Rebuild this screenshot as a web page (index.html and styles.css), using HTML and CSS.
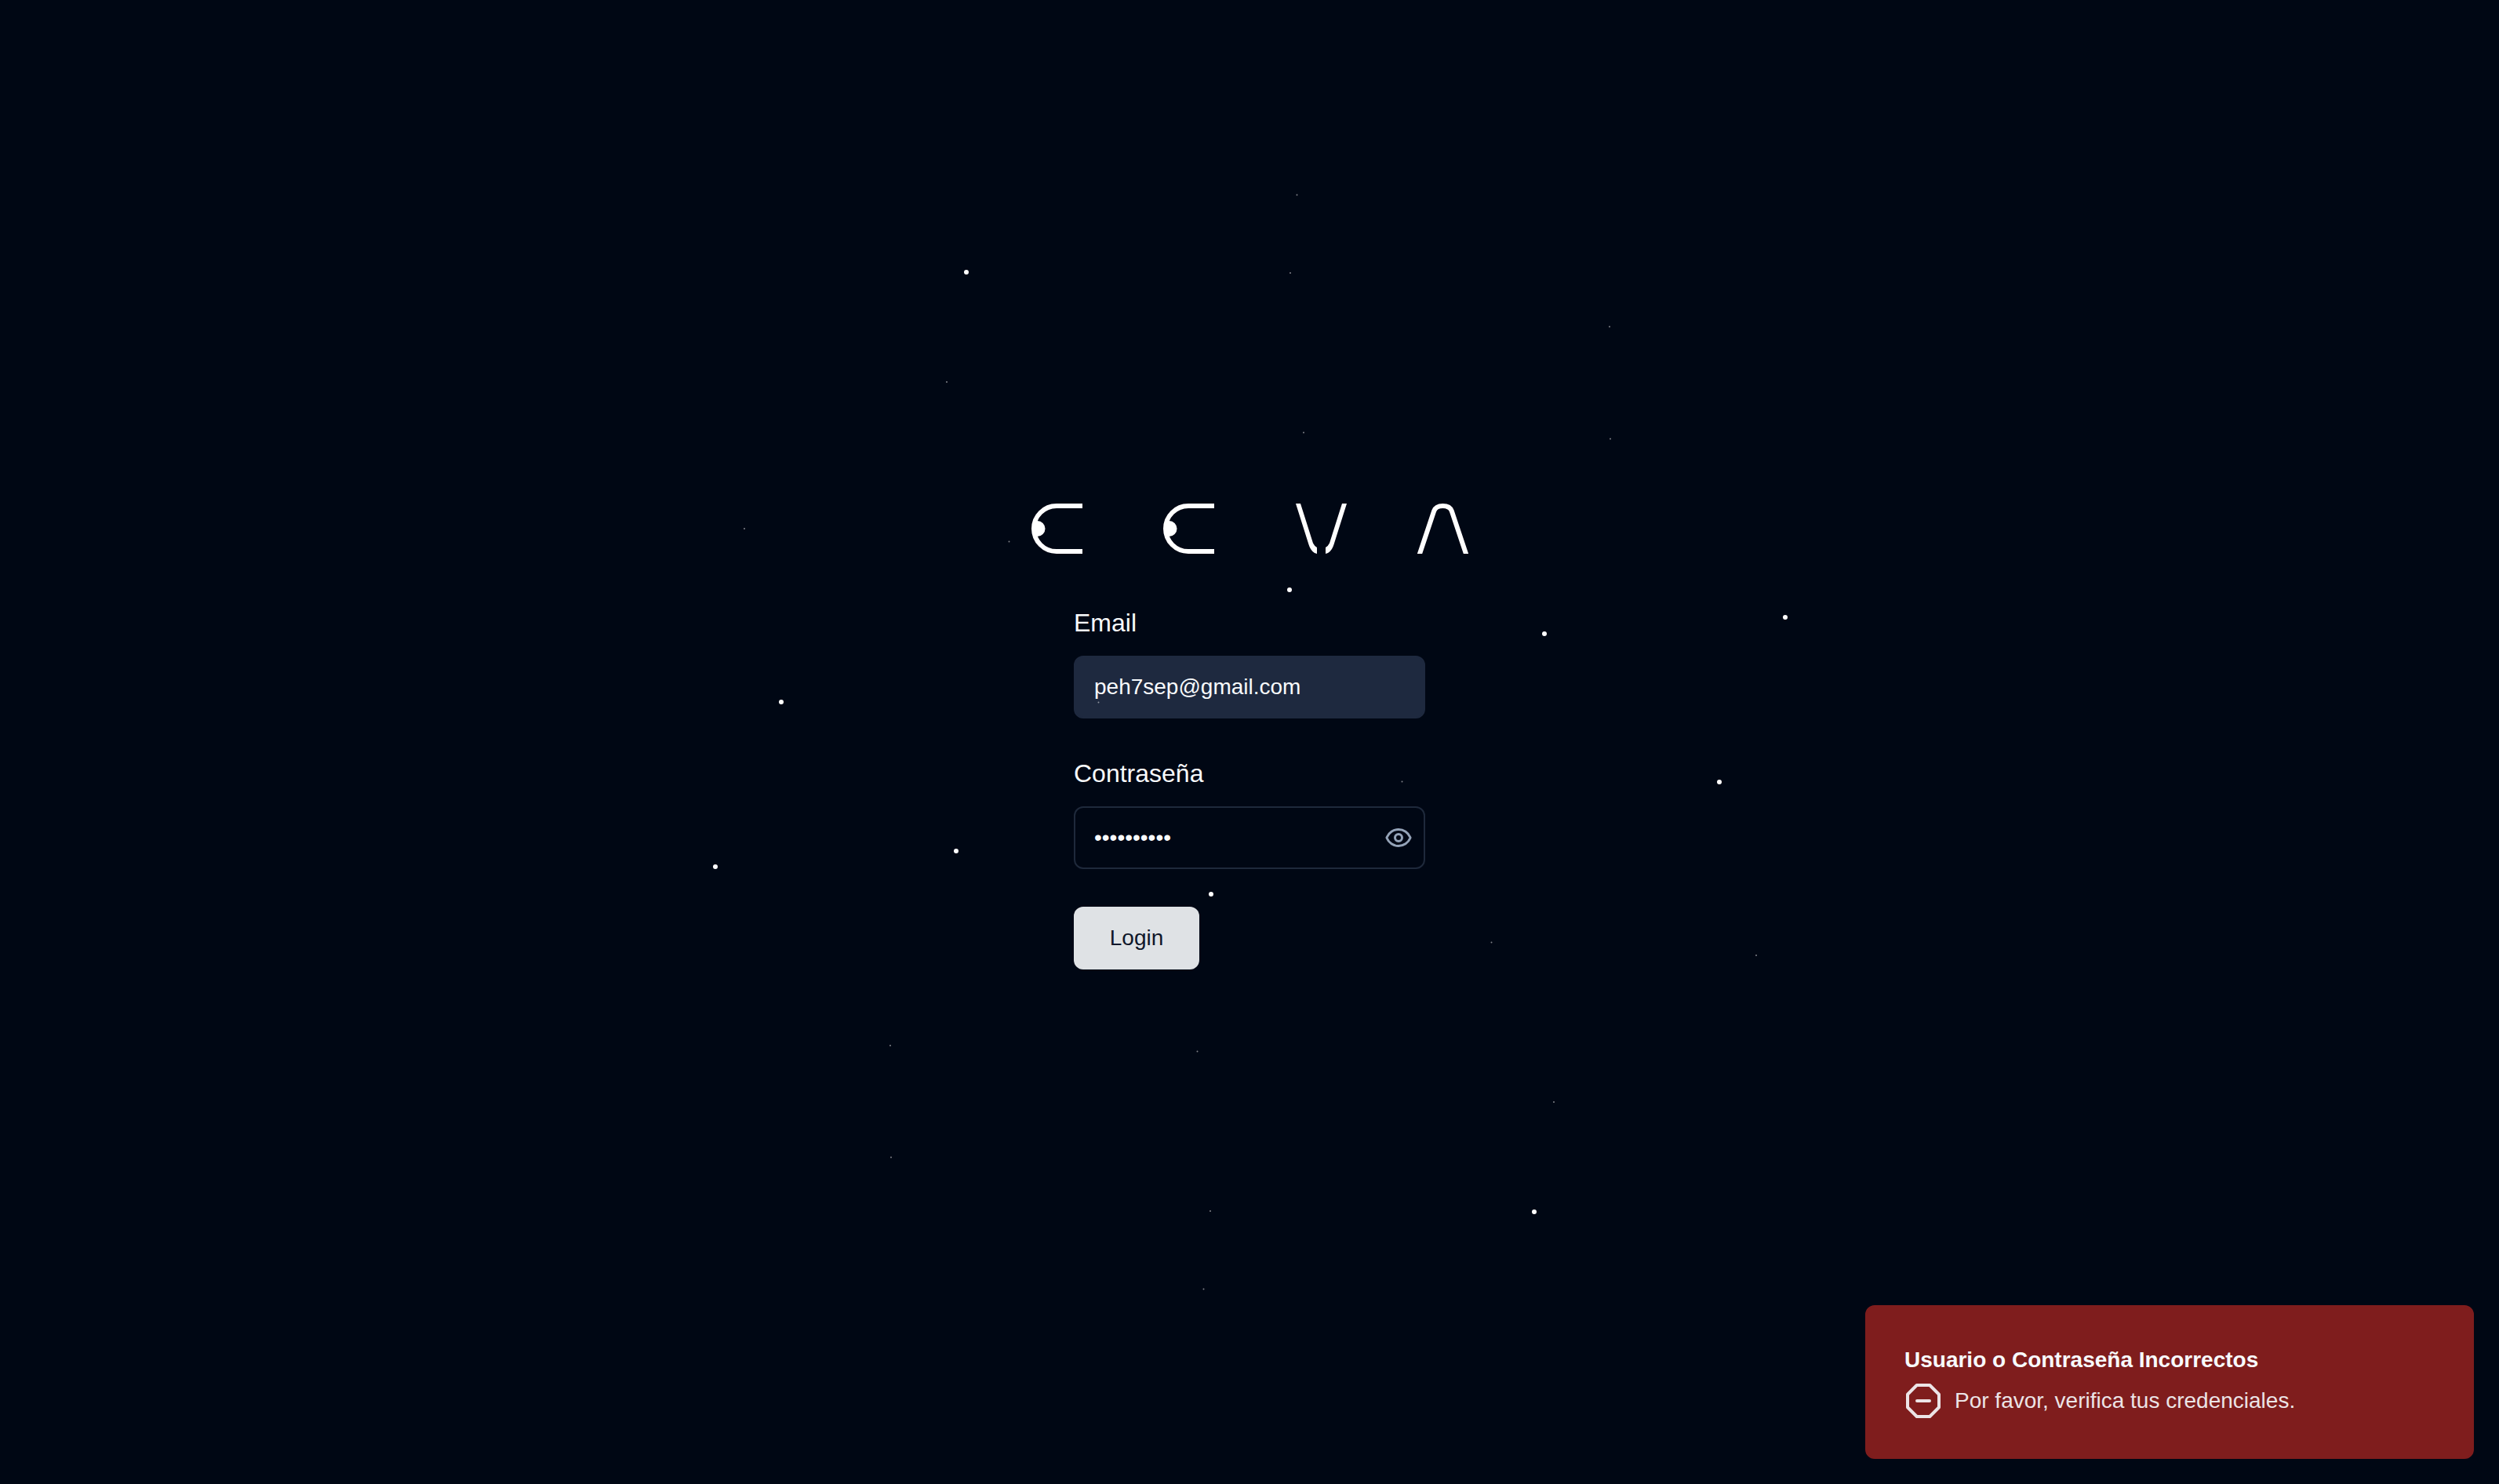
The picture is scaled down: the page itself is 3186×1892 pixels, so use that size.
FILE: index.html
```html
<!DOCTYPE html>
<html lang="es">
<head>
  <meta charset="utf-8">
  <meta name="viewport" content="width=device-width, initial-scale=1">
  <title>CEVA</title>
  <link rel="stylesheet" href="styles.css">
</head>
<body>
  <main class="page">
    <svg class="logo" viewBox="0 0 557 64" role="img" aria-label="CEVA">
      <defs>
        <g id="orbit">
          <path class="logo-line" d="M65 3H32A29 29 0 0 0 32 61H65"/>
          <path class="logo-fill" d="M4 22H7.500A10 10 0 0 1 7.500 42H4Z"/>
        </g>
        <path id="blade" class="logo-fill" d="M0 0H6L22 50.500Q24 54.500 27 56V64Q20.500 62.500 17.500 55Q16.500 52.500 15 47.500Z"/>
      </defs>
      <use href="#orbit"/>
      <use href="#orbit" x="168"/>
      <use href="#blade" x="337"/>
      <use href="#blade" transform="translate(402 0) scale(-1 1)"/>
      <path class="logo-line" d="M493 70L513.200 9.500Q515.500 3 524.500 3Q533.500 3 535.800 9.500L556 70"/>
    </svg>

    <form class="form">
      <div class="field">
        <label class="label" for="email">Email</label>
        <input class="input input-filled" id="email" type="email" value="peh7sep@gmail.com">
      </div>
      <div class="field">
        <label class="label" for="password">Contraseña</label>
        <div class="password">
          <input class="input" id="password" type="password" value="abcdefghij">
          <button class="reveal" type="button" aria-label="Mostrar contraseña">
            <svg class="icon" viewBox="0 0 24 24" aria-hidden="true">
              <path d="M2.062 12.348a1 1 0 0 1 0-.696 10.750 10.750 0 0 1 19.876 0 1 1 0 0 1 0 .696 10.750 10.750 0 0 1-19.876 0"/>
              <circle cx="12" cy="12" r="3"/>
            </svg>
          </button>
        </div>
      </div>
      <button class="submit" type="submit">Login</button>
    </form>
  </main>

  <svg class="stars" viewBox="-700 -720 1400 1440" aria-hidden="true">
    <g class="stars-near">
      <circle cx="-361" cy="-599" r="3"/>
      <circle cx="51" cy="-194" r="3"/>
      <circle cx="-597" cy="-51" r="3"/>
      <circle cx="-374" cy="139" r="3"/>
      <circle cx="-681" cy="159" r="3"/>
      <circle cx="376" cy="-138" r="3"/>
      <circle cx="683" cy="-159" r="3"/>
      <circle cx="599" cy="51" r="3"/>
      <circle cx="363" cy="599" r="3"/>
      <circle cx="-49" cy="194" r="3"/>
    </g>
    <g class="stars-far">
      <circle cx="60.500" cy="-697.500" r="1"/>
      <circle cx="52" cy="-598" r="1"/>
      <circle cx="-386" cy="-459" r="1"/>
      <circle cx="69" cy="-394.500" r="1"/>
      <circle cx="-644" cy="-272" r="1"/>
      <circle cx="-306.500" cy="-255.500" r="1"/>
      <circle cx="459" cy="-529.500" r="1"/>
      <circle cx="460" cy="-386.500" r="1"/>
      <circle cx="-458" cy="387" r="1"/>
      <circle cx="-457" cy="529.500" r="1"/>
      <circle cx="194.500" cy="50.500" r="1"/>
      <circle cx="308.500" cy="255.500" r="1"/>
      <circle cx="646" cy="272" r="1"/>
      <circle cx="388" cy="459" r="1"/>
      <circle cx="-66.500" cy="394.500" r="1"/>
      <circle cx="-50" cy="598" r="1"/>
      <circle cx="-58.500" cy="697.500" r="1"/>
      <circle cx="-192.500" cy="-50.500" r="1"/>
    </g>
  </svg>

  <div class="toast" role="alert">
    <strong class="toast-title">Usuario o Contraseña Incorrectos</strong>
    <div class="toast-body">
      <svg class="toast-icon" viewBox="0 0 24 24" aria-hidden="true">
        <path d="M7.860 2h8.280L22 7.860v8.280L16.140 22H7.860L2 16.140V7.860Z"/>
        <path d="M8 12h8"/>
      </svg>
      <span>Por favor, verifica tus credenciales.</span>
    </div>
  </div>
</body>
</html>
```
FILE: styles.css
```css
* {
  box-sizing: border-box;
}

body {
  margin: 0;
  background: #000714;
  color: #f8fafc;
  font-family: "Liberation Sans", Arial, sans-serif;
  font-size: 28px;
  line-height: 40px;
}

.page {
  display: flex;
  min-height: 100vh;
  flex-direction: column;
  align-items: center;
  justify-content: center;
  gap: 66px;
  padding-bottom: 14px;
}

.logo {
  width: 557px;
  max-width: 100%;
}

.logo-line {
  fill: none;
  stroke: #fff;
  stroke-width: 6;
}

.logo-fill {
  fill: #fff;
}

.form {
  display: flex;
  width: 448px;
  max-width: 100%;
  flex-direction: column;
  align-items: flex-start;
  gap: 48px;
}

.field {
  display: flex;
  width: 100%;
  flex-direction: column;
  gap: 20px;
}

.label {
  font-size: 32px;
  line-height: 44px;
}

.input {
  width: 100%;
  height: 80px;
  padding: 16px 24px;
  border: 2px solid #1e293b;
  border-radius: 12px;
  outline: none;
  background: transparent;
  color: inherit;
  font: inherit;
}

.input-filled {
  border-color: #1e293f;
  background: #1e293f;
}

.password {
  position: relative;
}

.reveal {
  position: absolute;
  inset: 0 16px 0 auto;
  display: flex;
  align-items: center;
  padding: 0;
  border: 0;
  background: none;
  color: #94a3b8;
}

.icon {
  width: 36px;
  height: 36px;
  fill: none;
  stroke: currentColor;
  stroke-width: 2;
  stroke-linecap: round;
  stroke-linejoin: round;
}

.submit {
  width: 160px;
  height: 80px;
  border: 0;
  border-radius: 12px;
  background: #dfe2e5;
  color: #0f172a;
  font: inherit;
}

.stars {
  position: fixed;
  top: 50%;
  left: 50%;
  width: 1400px;
  height: 1440px;
  transform: translate(-50%, -50%);
  pointer-events: none;
}

.stars-near {
  fill: #fff;
}

.stars-far {
  fill: #fff;
  opacity: 0.5;
}

.toast {
  position: fixed;
  right: 32px;
  bottom: 32px;
  display: flex;
  width: 776px;
  max-width: calc(100% - 64px);
  flex-direction: column;
  gap: 8px;
  padding: 48px;
  border: 2px solid #7f1d1d;
  border-radius: 12px;
  background: #7f1d1d;
}

.toast-body {
  display: flex;
  align-items: center;
  gap: 16px;
  opacity: 0.9;
}

.toast-icon {
  width: 48px;
  height: 48px;
  flex: none;
  fill: none;
  stroke: currentColor;
  stroke-width: 2;
  stroke-linecap: round;
  stroke-linejoin: round;
}
```
